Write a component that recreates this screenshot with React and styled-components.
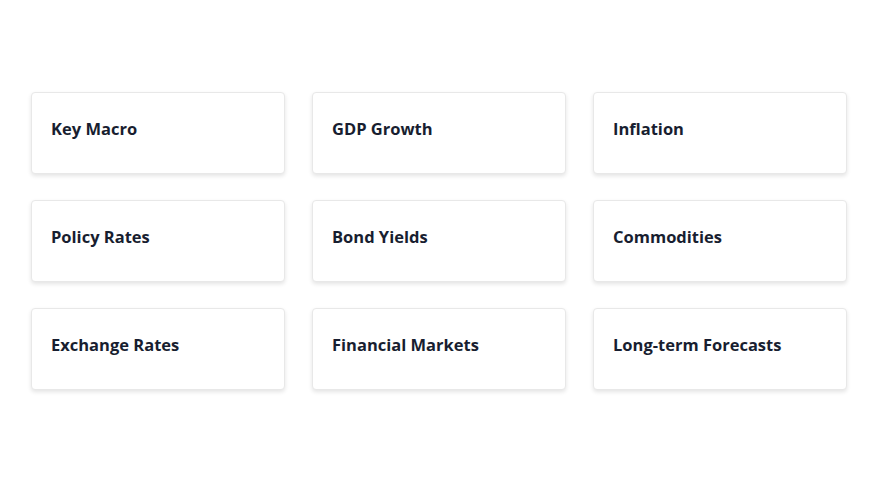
import styled, { createGlobalStyle } from "styled-components";

const GlobalStyle = createGlobalStyle`
  html, body {
    margin: 0;
    min-height: 100%;
    background: #ffffff;
    font-family: "Open Sans", "Lato", sans-serif;
  }
`;

const Page = styled.div`
  padding: 92px 33px 60px 31px;
`;

const Grid = styled.div`
  display: grid;
  grid-template-columns: repeat(3, 254px);
  column-gap: 27px;
  row-gap: 26px;
`;

const Card = styled.div`
  box-sizing: border-box;
  height: 82px;
  padding: 25px 19px 0;
  background: #ffffff;
  border: 1px solid #e8e8e8;
  border-radius: 4px;
  box-shadow: 0 2px 4px rgba(0, 0, 0, 0.11);
`;

const CardTitle = styled.div`
  font-size: 16.5px;
  font-weight: 700;
  line-height: 22px;
  color: #181e30;
`;

const topics = [
  "Key Macro",
  "GDP Growth",
  "Inflation",
  "Policy Rates",
  "Bond Yields",
  "Commodities",
  "Exchange Rates",
  "Financial Markets",
  "Long-term Forecasts",
];

const App = () => {
  return (
    <>
      <GlobalStyle />
      <Page>
        <Grid>
          {topics.map((t) => (
            <Card key={t}>
              <CardTitle>{t}</CardTitle>
            </Card>
          ))}
        </Grid>
      </Page>
    </>
  );
};

export default App;
